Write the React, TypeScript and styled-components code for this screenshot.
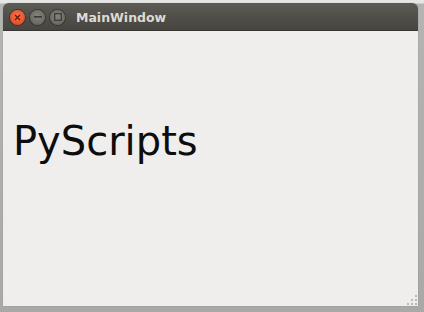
import React from "react";
import styled, { createGlobalStyle } from "styled-components";

const Global = createGlobalStyle`
  html, body { margin: 0; padding: 0; }
  body { width: 424px; height: 312px; overflow: hidden; }
`;

const Page = styled.div`
  width: 424px;
  height: 312px;
  box-sizing: border-box;
  padding: 3px 6px 6px 3px;
  background: linear-gradient(to bottom, #e6e6e4 0px, #e6e6e4 3px, #b4b4b2 4px, #a9a9a7 100%);
  display: flex;
`;

const Window = styled.div`
  flex: 1;
  display: flex;
  flex-direction: column;
  border-radius: 6px 6px 0 0;
  overflow: hidden;
  box-shadow: 0 0 1px rgba(0, 0, 0, 0.4);
`;

const TitleBar = styled.div`
  height: 28px;
  flex: none;
  display: flex;
  align-items: center;
  padding-left: 7px;
  gap: 5px;
  background: linear-gradient(to bottom, #5c5b55 0%, #504f4a 50%, #46453f 100%);
  border-bottom: 1px solid #373632;
  box-sizing: border-box;
`;

const Btn = styled.div<{ $kind: "close" | "min" | "max" }>`
  width: 15px;
  height: 15px;
  border-radius: 50%;
  display: flex;
  align-items: center;
  justify-content: center;
  margin-top: 1px;
  background: ${(p) =>
    p.$kind === "close"
      ? "radial-gradient(circle at 50% 40%, #f5744a 0%, #e5512a 70%, #c8401e 100%)"
      : "radial-gradient(circle at 50% 40%, #84837d 0%, #6a6964 70%, #5a5954 100%)"};
  box-shadow: 0 0 0 1px rgba(40, 40, 36, 0.6);
`;

const Title = styled.span`
  margin-left: 6px;
  font-family: "DejaVu Sans", sans-serif;
  font-weight: bold;
  font-size: 12.5px;
  color: #dedbd3;
  margin-top: 1px;
`;

const Content = styled.div`
  flex: 1;
  position: relative;
  background: #efeeed;
  padding: 87px 0 0 10px;
`;

const Label = styled.div`
  font-family: "DejaVu Sans", sans-serif;
  font-size: 40px;
  color: #0d0d0d;
  line-height: normal;
`;

const Grip = styled.svg`
  position: absolute;
  right: 0;
  bottom: 0;
`;

export default function App() {
  return (
    <>
      <Global />
      <Page>
        <Window>
          <TitleBar>
            <Btn $kind="close">
              <svg width="7" height="7" viewBox="0 0 7 7">
                <path d="M1 1L6 6M6 1L1 6" stroke="#6e1a08" strokeWidth="1.4" />
              </svg>
            </Btn>
            <Btn $kind="min">
              <svg width="8" height="2" viewBox="0 0 8 2">
                <rect x="0" y="0" width="8" height="1.6" fill="#3a3935" />
              </svg>
            </Btn>
            <Btn $kind="max">
              <svg width="8" height="8" viewBox="0 0 8 8">
                <rect x="0.7" y="0.7" width="6.6" height="6.6" fill="none" stroke="#3a3935" strokeWidth="1.2" />
              </svg>
            </Btn>
            <Title>MainWindow</Title>
          </TitleBar>
          <Content>
            <Label>PyScripts</Label>
            <Grip width="12" height="12" viewBox="0 0 12 12">
              <rect x="9" y="1" width="2" height="2" fill="#b8b8b6" />
              <rect x="9" y="5" width="2" height="2" fill="#b8b8b6" />
              <rect x="5" y="5" width="2" height="2" fill="#b8b8b6" />
              <rect x="9" y="9" width="2" height="2" fill="#b8b8b6" />
              <rect x="5" y="9" width="2" height="2" fill="#b8b8b6" />
              <rect x="1" y="9" width="2" height="2" fill="#b8b8b6" />
            </Grip>
          </Content>
        </Window>
      </Page>
    </>
  );
}
